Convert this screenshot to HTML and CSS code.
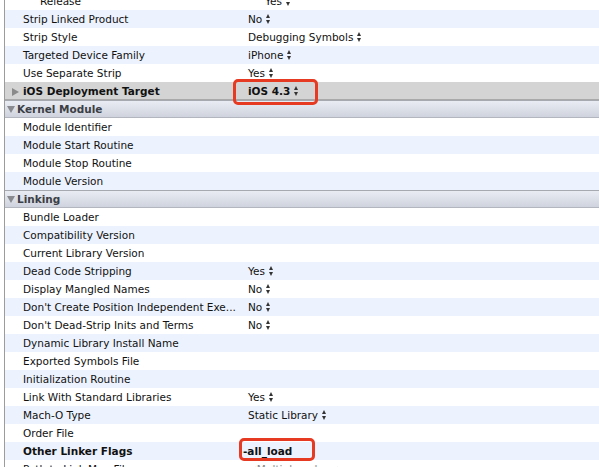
FILE: index.html
```html
<!DOCTYPE html>
<html>
<head>
<meta charset="utf-8">
<link rel="stylesheet" href="styles.css">
</head>
<body>
<div class="page">
  <div class="list">
    <div class="row"><div class="label sub">Release</div><div class="value">Yes <span class="step"></span></div></div>
    <div class="row alt"><div class="label">Strip Linked Product</div><div class="value">No <span class="step"></span></div></div>
    <div class="row"><div class="label">Strip Style</div><div class="value">Debugging Symbols <span class="step"></span></div></div>
    <div class="row alt"><div class="label">Targeted Device Family</div><div class="value">iPhone <span class="step"></span></div></div>
    <div class="row"><div class="label">Use Separate Strip</div><div class="value">Yes <span class="step"></span></div></div>
    <div class="row sel"><div class="label bold"><span class="tri-r"></span>iOS Deployment Target</div><div class="value bold mark">iOS 4.3 <span class="step"></span><span class="ring ring1"></span></div></div>
    <div class="head"><span class="tri-d"></span>Kernel Module</div>
    <div class="row"><div class="label">Module Identifier</div><div class="value"></div></div>
    <div class="row alt"><div class="label">Module Start Routine</div><div class="value"></div></div>
    <div class="row"><div class="label">Module Stop Routine</div><div class="value"></div></div>
    <div class="row alt"><div class="label">Module Version</div><div class="value"></div></div>
    <div class="head"><span class="tri-d"></span>Linking</div>
    <div class="row"><div class="label">Bundle Loader</div><div class="value"></div></div>
    <div class="row alt"><div class="label">Compatibility Version</div><div class="value"></div></div>
    <div class="row"><div class="label">Current Library Version</div><div class="value"></div></div>
    <div class="row alt"><div class="label">Dead Code Stripping</div><div class="value">Yes <span class="step"></span></div></div>
    <div class="row"><div class="label">Display Mangled Names</div><div class="value">No <span class="step"></span></div></div>
    <div class="row alt"><div class="label">Don't Create Position Independent Exe...</div><div class="value">No <span class="step"></span></div></div>
    <div class="row"><div class="label">Don't Dead-Strip Inits and Terms</div><div class="value">No <span class="step"></span></div></div>
    <div class="row alt"><div class="label">Dynamic Library Install Name</div><div class="value"></div></div>
    <div class="row"><div class="label">Exported Symbols File</div><div class="value"></div></div>
    <div class="row alt"><div class="label">Initialization Routine</div><div class="value"></div></div>
    <div class="row"><div class="label">Link With Standard Libraries</div><div class="value">Yes <span class="step"></span></div></div>
    <div class="row alt"><div class="label">Mach-O Type</div><div class="value">Static Library <span class="step"></span></div></div>
    <div class="row"><div class="label">Order File</div><div class="value"></div></div>
    <div class="row alt"><div class="label bold">Other Linker Flags</div><div class="value bold flag mark">-all_load<span class="ring ring2"></span></div></div>
    <div class="row"><div class="label"><span class="tri-d grey"></span>Path to Link Map File</div><div class="value multi">&lt;Multiple values&gt;</div></div>
  </div>
</div>
</body>
</html>
```

FILE: styles.css
```css
html, body {
  margin: 0;
  padding: 0;
  background: #ffffff;
  overflow: hidden;
}
.page {
  width: 599px;
  height: 467px;
  padding-left: 4px;
  box-sizing: border-box;
  overflow: hidden;
  font-family: "DejaVu Sans", sans-serif;
  font-size: 10.5px;
  color: #111111;
}
.list {
  margin-top: -8px;
  border-left: 1px solid #9c9c9c;
}
.row {
  display: flex;
  height: 18px;
  align-items: center;
  background: #ffffff;
}
.row.alt {
  background: #edf3fe;
}
.row.sel {
  background: #d4d4d4;
  border-bottom: 1px solid #a9a9a9;
  height: 17px;
}
.label {
  width: 225px;
  padding-left: 18px;
  position: relative;
  white-space: nowrap;
  flex: none;
}
.label.sub {
  padding-left: 35px;
}
.value {
  position: relative;
  white-space: nowrap;
  display: flex;
  align-items: center;
  gap: 3px;
}
.bold {
  font-weight: bold;
}
.flag {
  margin-left: -5px;
}
.multi {
  color: #8a8a8a;
}
.step {
  display: inline-block;
  width: 7px;
  height: 10px;
  position: relative;
}
.step::before, .step::after {
  content: "";
  position: absolute;
  left: 1px;
  border-left: 2.5px solid transparent;
  border-right: 2.5px solid transparent;
}
.step::before {
  top: 0;
  border-bottom: 4px solid #333;
}
.step::after {
  bottom: 0;
  border-top: 4px solid #333;
}
.tri-r {
  position: absolute;
  left: 7px;
  top: 3px;
  border-top: 4.5px solid transparent;
  border-bottom: 4.5px solid transparent;
  border-left: 7px solid #8a8a8a;
}
.head {
  height: 16px;
  border-top: 1px solid #a7a9b1;
  border-bottom: 1px solid #b3b6be;
  background: linear-gradient(#e9ecf3, #cfd3dd);
  display: flex;
  align-items: center;
  padding-left: 2px;
  font-weight: bold;
  color: #3c3f46;
  gap: 1px;
}
.tri-d {
  display: inline-block;
  border-left: 4.5px solid transparent;
  border-right: 4.5px solid transparent;
  border-top: 7px solid #888a90;
  margin-right: 1px;
}
.tri-d.grey {
  position: absolute;
  left: 7px;
  top: 4px;
  border-top-color: #999;
  margin: 0;
}
.ring {
  position: absolute;
  border: 3px solid #e63a22;
  border-radius: 5px;
  box-sizing: border-box;
}
.ring1 {
  left: -15px;
  top: -6px;
  width: 85px;
  height: 26px;
}
.ring2 {
  left: -4px;
  top: -7px;
  width: 76px;
  height: 23px;
}
```
